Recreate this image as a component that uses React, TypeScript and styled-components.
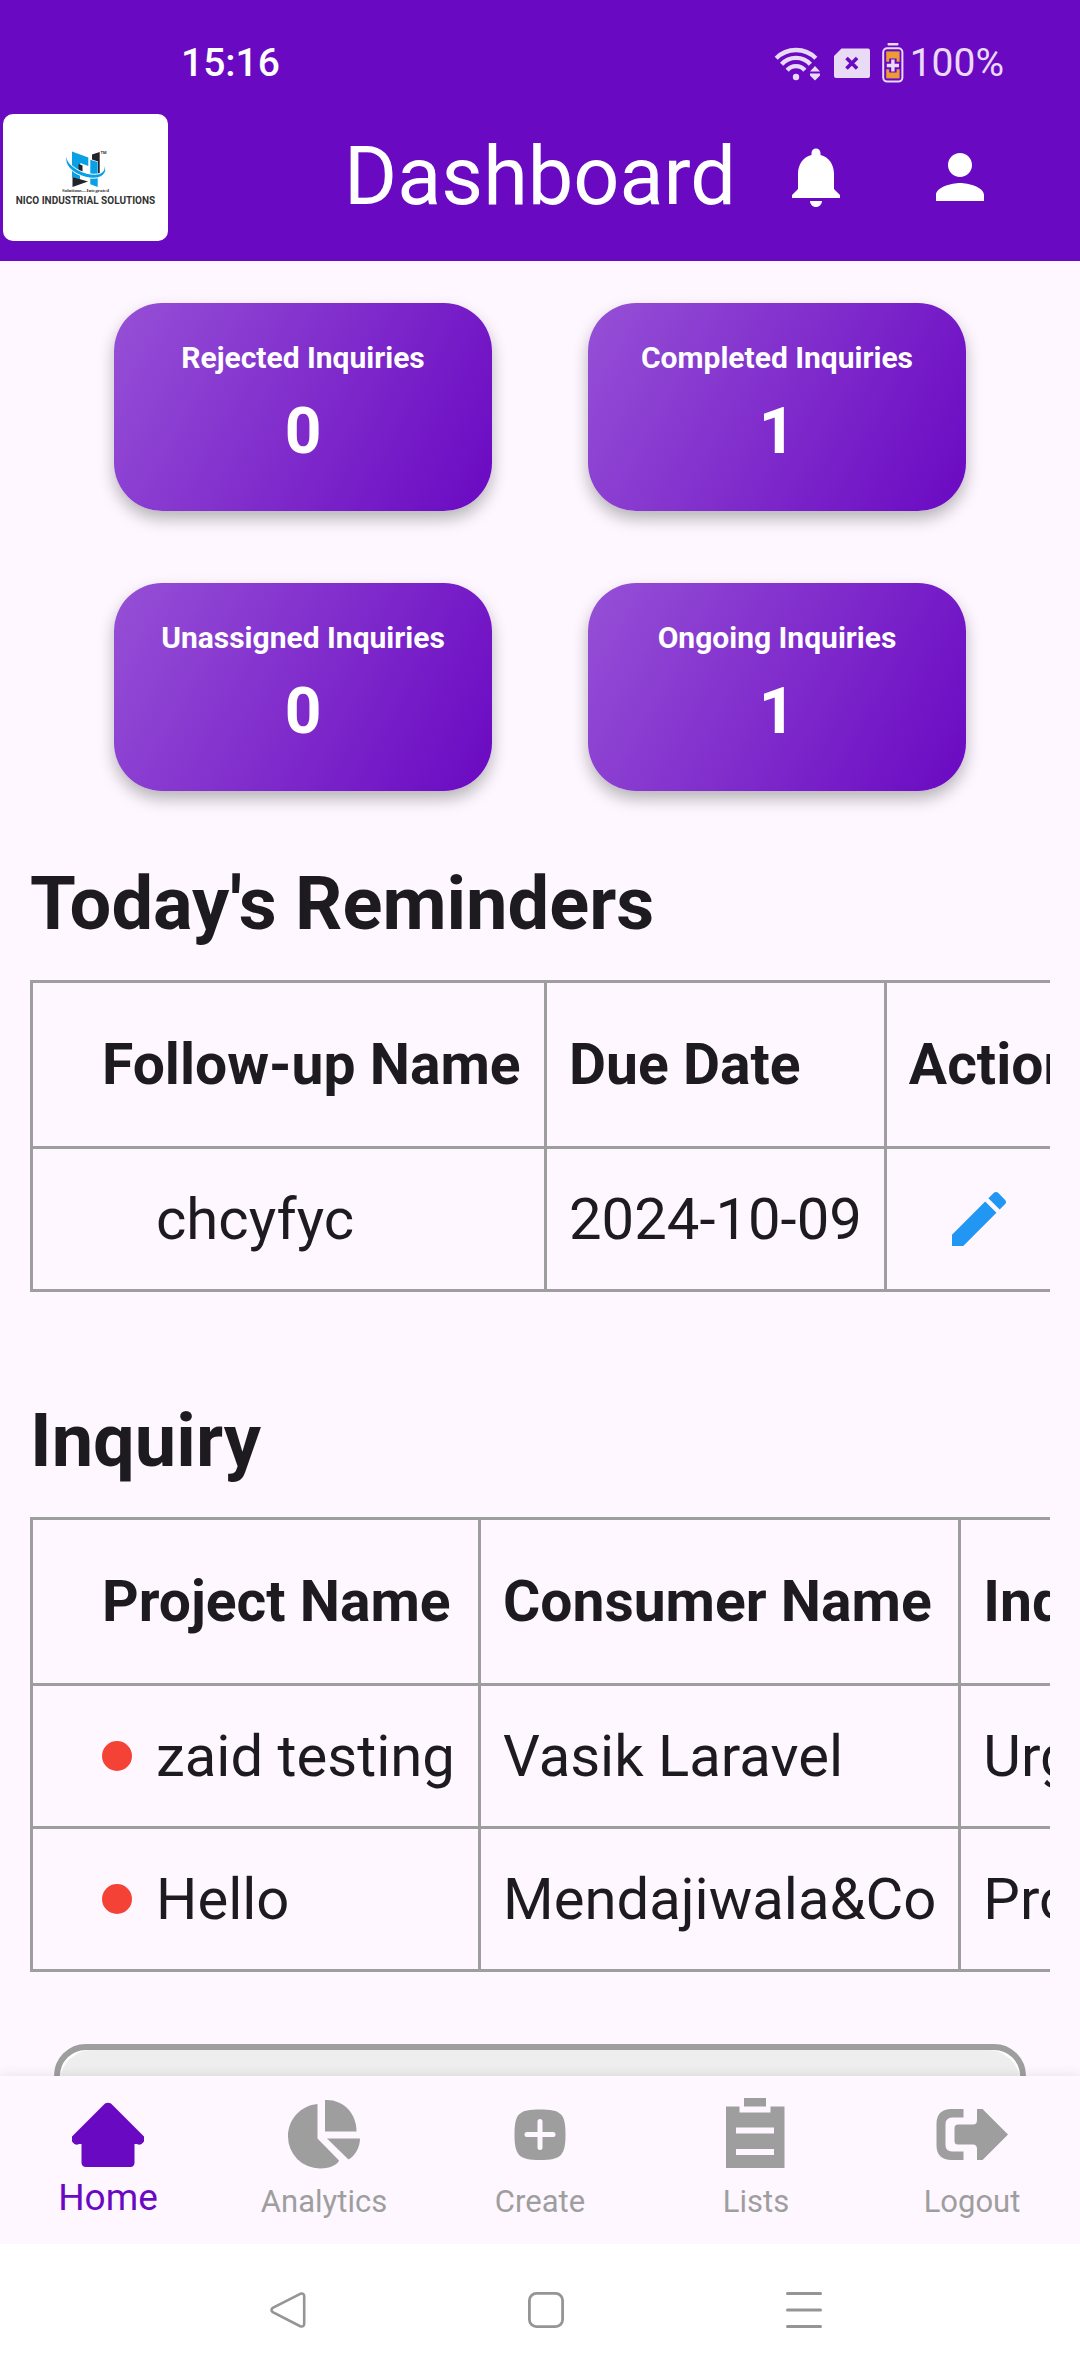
import React from "react";
import styled, { createGlobalStyle } from "styled-components";

const color = {
  brand: "#6a09c2",
  brandLight: "#9650d6",
  surface: "#fef7ff",
  ink: "#1d1b20",
  line: "#9e9e9e",
  muted: "#9e9e9e",
  system: "#959595",
  status: "#e9daf6",
  edit: "#2196f3",
  alert: "#f44336",
};

const GlobalStyle = createGlobalStyle`
  * { box-sizing: border-box; }
  body {
    margin: 0;
    background: ${color.surface};
    color: ${color.ink};
    font-family: Roboto, "Noto Sans", sans-serif;
  }
  button { font: inherit; color: inherit; border: 0; padding: 0; background: none; cursor: pointer; }
  a { color: inherit; text-decoration: none; }
  svg { display: block; flex: none; }
`;

const Screen = styled.div`
  display: flex;
  flex-direction: column;
  height: 100vh;
`;

const Header = styled.header`
  flex: none;
  background: ${color.brand};
  color: #fff;
`;

const StatusBar = styled.div`
  display: flex;
  align-items: center;
  justify-content: space-between;
  height: 93px;
  padding: 32px 76px 0 181px;
  font-size: 39px;
  line-height: 48px;
`;

const Clock = styled.time`
  font-weight: 500;
`;

const StatusIcons = styled.div`
  display: flex;
  align-items: center;
  gap: 12px;
  color: ${color.status};
`;

const BatteryLevel = styled.span`
  display: flex;
  align-items: center;
  gap: 6px;
`;

const Toolbar = styled.div`
  display: grid;
  grid-template-columns: 1fr auto 1fr;
  align-items: center;
  height: 168px;
`;

const Logo = styled.a`
  justify-self: start;
  display: flex;
  flex-direction: column;
  align-items: center;
  width: 165px;
  height: 127px;
  margin-left: 3px;
  padding-top: 36px;
  border-radius: 10px;
  background: #fff;
  color: #333;
  white-space: nowrap;
`;

const LogoTag = styled.span`
  font-family: "Liberation Serif", serif;
  font-size: 5px;
  line-height: 6px;
  font-weight: 700;
`;

const LogoName = styled.span`
  font-size: 10px;
  line-height: 14px;
  font-weight: 700;
`;

const Title = styled.h1`
  margin: 0;
  font-size: 81px;
  line-height: 96px;
  font-weight: 400;
`;

const Actions = styled.div`
  display: flex;
  justify-content: flex-end;
  padding-right: 48px;
`;

const IconButton = styled.button`
  display: grid;
  place-items: center;
  width: 144px;
  height: 144px;
`;

const Content = styled.main`
  flex: 1;
  min-height: 0;
  overflow-y: auto;
  scrollbar-width: none;
`;

const Stats = styled.section`
  display: grid;
  grid-template-columns: 1fr 1fr;
  gap: 72px 96px;
  padding: 42px 114px 0;
`;

const StatCard = styled.article`
  display: flex;
  flex-direction: column;
  align-items: center;
  gap: 16px;
  height: 208px;
  padding-top: 37px;
  border-radius: 48px;
  background: linear-gradient(119deg, ${color.brandLight}, ${color.brand});
  box-shadow: 0 8px 16px rgba(0, 0, 0, 0.28);
  color: #fff;
`;

const StatLabel = styled.h2`
  margin: 0;
  font-size: 30px;
  line-height: 36px;
  font-weight: 700;
`;

const StatValue = styled.p`
  margin: 0;
  font-size: 64px;
  line-height: 80px;
  font-weight: 700;
`;

const Section = styled.section`
  padding: 66px 30px 0;

  & + & {
    padding-top: 102px;
  }
`;

const SectionTitle = styled.h2`
  margin: 0 0 29px;
  font-size: 74px;
  line-height: 94px;
  font-weight: 700;
`;

const TableScroller = styled.div`
  overflow-x: auto;
  scrollbar-width: none;
`;

const Table = styled.table`
  border-collapse: collapse;
  width: max-content;
  font-size: 58px;
  line-height: 72px;
  text-align: left;
  white-space: nowrap;
`;

const Column = styled.col<{ $width: number }>`
  width: ${(p) => p.$width}px;
`;

const HeadCell = styled.th`
  height: 166px;
  padding: 0 22px;
  border: 3px solid ${color.line};
  font-size: 57px;
  font-weight: 700;

  &:first-child {
    padding-left: 69px;
  }
`;

const Cell = styled.td`
  height: 143px;
  padding: 0 22px;
  border: 3px solid ${color.line};

  &:first-child {
    padding-left: 69px;
  }
`;

const NameWithMark = styled.div`
  display: flex;
  align-items: center;
  gap: 24px;
`;

const Mark = styled.span<{ $on: boolean }>`
  width: 30px;
  height: 30px;
  border-radius: 50%;
  background: ${(p) => (p.$on ? color.alert : "transparent")};
`;

const EditButton = styled.button`
  display: block;
  margin-left: 34px;
  color: ${color.edit};
`;

const ChartFrame = styled.section`
  height: 420px;
  margin: 72px 54px 48px;
  border: 6px solid ${color.line};
  border-radius: 32px;
  background: #fff;
`;

const ChartSurface = styled.div`
  height: 100%;
  border-radius: 32px;
  background: #eee;
`;

const BottomNav = styled.nav`
  position: relative;
  flex: none;
  display: grid;
  grid-template-columns: repeat(5, 1fr);
  height: 168px;
  background: ${color.surface};
  box-shadow: 0 0 12px rgba(0, 0, 0, 0.1);
`;

const NavItem = styled.a<{ $active?: boolean }>`
  display: flex;
  flex-direction: column;
  align-items: center;
  gap: 7px;
  padding-top: 23px;
  color: ${(p) => (p.$active ? color.brand : color.muted)};
  font-size: ${(p) => (p.$active ? 37 : 31)}px;
  line-height: ${(p) => (p.$active ? 40 : 48)}px;

  svg { overflow: visible; }
`;

const SystemBar = styled.div`
  position: relative;
  flex: none;
  display: flex;
  align-items: center;
  justify-content: space-between;
  height: 132px;
  padding: 0 240px 0 252px;
  background: #fff;
  color: ${color.system};
`;

const SystemButton = styled.button`
  display: grid;
  place-items: center;
  width: 72px;
  height: 72px;
`;

const WifiIcon = () => (
  <svg width="48" height="40" viewBox="0 0 48 40" aria-hidden="true">
    <g fill="none" stroke="currentColor" strokeWidth="4.4">
      <path d="M2.2 15.2A28 28 0 0 1 41.8 15.2" />
      <path d="M7.6 21.2A19.6 19.6 0 0 1 36.4 21.2" />
      <path d="M13.2 27.2A11.6 11.6 0 0 1 30.8 27.2" />
    </g>
    <circle cx="22" cy="34" r="3.2" fill="currentColor" />
    <path d="M41 23l5 5.6H36zM41 37.4l5-5H36zM36 30.6h10v2H36z" fill="currentColor" />
  </svg>
);

const SimIcon = () => (
  <svg width="36" height="30" viewBox="0 0 36 30" aria-hidden="true">
    <path d="M7.5.5H34q2 0 2 2V28q0 2-2 2H2q-2 0-2-2V8z" fill="currentColor" />
    <path d="M12.5 10l10.6 10.6M23.1 10L12.5 20.6" stroke={color.brand} strokeWidth="3.6" />
  </svg>
);

const BatteryIcon = () => (
  <svg width="22" height="40" viewBox="0 0 22 40" aria-hidden="true">
    <rect x="5.5" y="0" width="11" height="2.4" rx=".8" fill="currentColor" />
    <rect x="1.2" y="5.2" width="19.2" height="33.4" rx="4" fill="none" stroke="currentColor" strokeWidth="2" />
    <rect x="4.2" y="8.4" width="13.4" height="27" fill="#ec9c35" />
    <path d="M10.9 15.4v14.2M3.6 22.5h14.6" stroke={color.brand} strokeWidth="7.4" />
    <path d="M10.9 16.4v12.2M4.8 22.5H17" stroke="currentColor" strokeWidth="3.4" />
  </svg>
);

const LogoMark = () => (
  <svg width="46" height="38" viewBox="0 0 46 38" aria-hidden="true">
    <path d="M9 1.5l16.3 6V16l-8-3v10L9 19z" fill="#0aa0e4" />
    <path d="M15.5 14l4 1.5V24l-4-2z" fill="#23232a" />
    <path d="M29 4.5L36.7 2v22H35V11.5L29 9.5z" fill="#23232a" />
    <path d="M27.3 9.700l7.4 2.2v25l-7.4-2.7z" fill="#0aa0e4" />
    <path d="M9 20l8 5v4.5L9 27z" fill="#0aa0e4" />
    <path d="M9.5 27L25 31.5 9.5 37z" fill="#23232a" />
    <path
      d="M4 5.5C.5 11 5 19 14 23.8 25 29.6 38.5 30.5 42.3 22 43.2 20 42.6 17.5 40.5 15c1.2 4 .5 6-2 7.600C33 26 22 24 13.5 19 6.5 14.8 3.5 10 4 5.5z"
      fill="#0aa0e4"
      stroke="#fff"
      strokeWidth="1"
    />
    <text x="37.5" y="3.6" fontSize="4" fontFamily="Roboto, sans-serif" fontWeight="700" fill="#333">TM</text>
  </svg>
);

const BellIcon = () => (
  <svg width="72" height="72" viewBox="0 0 24 24" fill="currentColor" aria-hidden="true">
    <path d="M12 22c1.1 0 2-.9 2-2h-4c0 1.1.89 2 2 2zm6-6v-5c0-3.07-1.64-5.64-4.5-6.32V4c0-.83-.67-1.5-1.5-1.5s-1.5.67-1.5 1.5v.68C7.63 5.36 6 7.92 6 11v5l-2 2v1h16v-1l-2-2z" />
  </svg>
);

const PersonIcon = () => (
  <svg width="72" height="72" viewBox="0 0 24 24" fill="currentColor" aria-hidden="true">
    <path d="M12 12c2.21 0 4-1.79 4-4s-1.79-4-4-4-4 1.79-4 4 1.79 4 4 4zm0 2c-2.67 0-8 1.34-8 4v2h16v-2c0-2.66-5.33-4-8-4z" />
  </svg>
);

const PencilIcon = () => (
  <svg width="72" height="72" viewBox="0 0 24 24" fill="currentColor" aria-hidden="true">
    <path d="M3 17.25V21h3.75L17.81 9.94l-3.75-3.75L3 17.25zM20.71 7.04c.39-.39.39-1.02 0-1.41l-2.34-2.34c-.39-.39-1.02-.39-1.41 0l-1.83 1.83 3.75 3.75 1.83-1.83z" />
  </svg>
);

const HomeIcon = () => (
  <svg width="72" height="72" viewBox="0 0 72 72" fill="currentColor" aria-hidden="true">
    <path d="M33 4.5Q36 3 39 4.5L72 37.5V42.500Q68.5 47.5 65 45H62.5V64Q62 68 58.5 68H14Q10 68 9.5 64V45H7Q3.5 47.5 0 42.500V37.5z" />
  </svg>
);

const PieIcon = () => (
  <svg width="72" height="72" viewBox="0 0 72 72" fill="currentColor" aria-hidden="true">
    <path d="M29.5 5V39.5L51 61.5C50 65 43 69.5 32 69.5A32 32 0 0 1 0 37.5C0 20 13 6.5 29.5 5z" />
    <path d="M37 1C55 0 68.5 14 68.5 32.5H37z" />
    <path d="M39 39.5H72C72 48 67 57 60.5 60.5z" />
  </svg>
);

const CreateIcon = () => (
  <svg width="72" height="72" viewBox="0 0 72 72" aria-hidden="true">
    <path
      d="M36 10.5C57 10.5 61.5 14.5 61.5 35.5S57 61 36 61 10.5 56.5 10.5 35.5 15 10.5 36 10.5z"
      fill="currentColor"
    />
    <path d="M36 22.5v26M23 35.5h26" stroke={color.surface} strokeWidth="5" strokeLinecap="round" />
  </svg>
);

const ListIcon = () => (
  <svg width="72" height="72" viewBox="0 0 72 72" fill="currentColor" aria-hidden="true">
    <path d="M24-1h22v8.5H24z" />
    <path d="M6 7.5h13.5v6h31v-6h14V69H6zM16 28.5v6h38v-6zM16 50v6h38v-6z" fillRule="evenodd" />
  </svg>
);

const LogoutIcon = () => (
  <svg width="72" height="72" viewBox="0 0 72 72" fill="currentColor" aria-hidden="true">
    <path d="M27.5 10v8.5H16Q9.5 19 9.5 25V46Q9.5 52 16 52.5H27.5V61H14Q1 60 0.5 47V24Q1 11 14 10z" />
    <path d="M18.5 29Q18.5 25.5 22 25.5H37Q41 25.5 41 21V10H46.5L72 35.5 46.5 61H41V50Q41 45.5 37 45.5H22Q18.5 45.5 18.5 42z" />
  </svg>
);

const BackIcon = () => (
  <svg width="36" height="36" viewBox="0 0 36 36" fill="none" stroke="currentColor" strokeWidth="2.6" aria-hidden="true">
    <path d="M30.2 1.8L2.8 15.8Q.2 18 2.8 20.2L30.2 34.2Q34 35.2 34.2 32V4Q34 .8 30.2 1.8z" />
  </svg>
);

const RecentsIcon = () => (
  <svg width="36" height="36" viewBox="0 0 36 36" fill="none" stroke="currentColor" strokeWidth="2.8" aria-hidden="true">
    <rect x="1.4" y="1.4" width="33.2" height="33.2" rx="7" />
  </svg>
);

const MenuIcon = () => (
  <svg width="36" height="36" viewBox="0 0 36 36" stroke="currentColor" strokeWidth="3" strokeLinecap="round" aria-hidden="true">
    <path d="M1.5 1.5h33M1.5 18h33M1.5 34.5h33" />
  </svg>
);

const stats = [
  { label: "Rejected Inquiries", value: 0 },
  { label: "Completed Inquiries", value: 1 },
  { label: "Unassigned Inquiries", value: 0 },
  { label: "Ongoing Inquiries", value: 1 },
];

const reminders = [{ name: "chcyfyc", due: "2024-10-09", flagged: false }];

const inquiries = [
  { project: "zaid testing", consumer: "Vasik Laravel", type: "Urgent", flagged: true },
  { project: "Hello", consumer: "Mendajiwala&Co", type: "Project", flagged: true },
];

const navItems = [
  { label: "Home", Icon: HomeIcon, active: true },
  { label: "Analytics", Icon: PieIcon },
  { label: "Create", Icon: CreateIcon },
  { label: "Lists", Icon: ListIcon },
  { label: "Logout", Icon: LogoutIcon },
];

export default function App() {
  return (
    <Screen>
      <GlobalStyle />
      <Header>
        <StatusBar>
          <Clock>15:16</Clock>
          <StatusIcons>
            <WifiIcon />
            <SimIcon />
            <BatteryLevel>
              <BatteryIcon />
              100%
            </BatteryLevel>
          </StatusIcons>
        </StatusBar>
        <Toolbar>
          <Logo href="#home">
            <LogoMark />
            <LogoTag>Solutions....Integrated</LogoTag>
            <LogoName>NICO INDUSTRIAL SOLUTIONS</LogoName>
          </Logo>
          <Title>Dashboard</Title>
          <Actions>
            <IconButton type="button" aria-label="Notifications">
              <BellIcon />
            </IconButton>
            <IconButton type="button" aria-label="Profile">
              <PersonIcon />
            </IconButton>
          </Actions>
        </Toolbar>
      </Header>

      <Content>
        <Stats>
          {stats.map((s) => (
            <StatCard key={s.label}>
              <StatLabel>{s.label}</StatLabel>
              <StatValue>{s.value}</StatValue>
            </StatCard>
          ))}
        </Stats>

        <Section>
          <SectionTitle>Today's Reminders</SectionTitle>
          <TableScroller>
            <Table>
              <colgroup>
                <Column $width={514} />
                <Column $width={338} />
                <Column $width={260} />
              </colgroup>
              <thead>
                <tr>
                  <HeadCell scope="col">Follow-up Name</HeadCell>
                  <HeadCell scope="col">Due Date</HeadCell>
                  <HeadCell scope="col">Actions</HeadCell>
                </tr>
              </thead>
              <tbody>
                {reminders.map((r) => (
                  <tr key={r.name}>
                    <Cell>
                      <NameWithMark>
                        <Mark $on={r.flagged} />
                        {r.name}
                      </NameWithMark>
                    </Cell>
                    <Cell>{r.due}</Cell>
                    <Cell>
                      <EditButton type="button" aria-label={`Edit ${r.name}`}>
                        <PencilIcon />
                      </EditButton>
                    </Cell>
                  </tr>
                ))}
              </tbody>
            </Table>
          </TableScroller>
        </Section>

        <Section>
          <SectionTitle>Inquiry</SectionTitle>
          <TableScroller>
            <Table>
              <colgroup>
                <Column $width={448} />
                <Column $width={479} />
                <Column $width={360} />
              </colgroup>
              <thead>
                <tr>
                  <HeadCell scope="col">Project Name</HeadCell>
                  <HeadCell scope="col">Consumer Name</HeadCell>
                  <HeadCell scope="col">Inquiry Type</HeadCell>
                </tr>
              </thead>
              <tbody>
                {inquiries.map((q) => (
                  <tr key={q.project}>
                    <Cell>
                      <NameWithMark>
                        <Mark $on={q.flagged} />
                        {q.project}
                      </NameWithMark>
                    </Cell>
                    <Cell>{q.consumer}</Cell>
                    <Cell>{q.type}</Cell>
                  </tr>
                ))}
              </tbody>
            </Table>
          </TableScroller>
        </Section>

        <ChartFrame>
          <ChartSurface />
        </ChartFrame>
      </Content>

      <BottomNav>
        {navItems.map(({ label, Icon, active }) => (
          <NavItem key={label} href={`#${label.toLowerCase()}`} $active={active} aria-current={active ? "page" : undefined}>
            <Icon />
            {label}
          </NavItem>
        ))}
      </BottomNav>

      <SystemBar>
        <SystemButton type="button" aria-label="Back">
          <BackIcon />
        </SystemButton>
        <SystemButton type="button" aria-label="Home screen">
          <RecentsIcon />
        </SystemButton>
        <SystemButton type="button" aria-label="Menu">
          <MenuIcon />
        </SystemButton>
      </SystemBar>
    </Screen>
  );
}
